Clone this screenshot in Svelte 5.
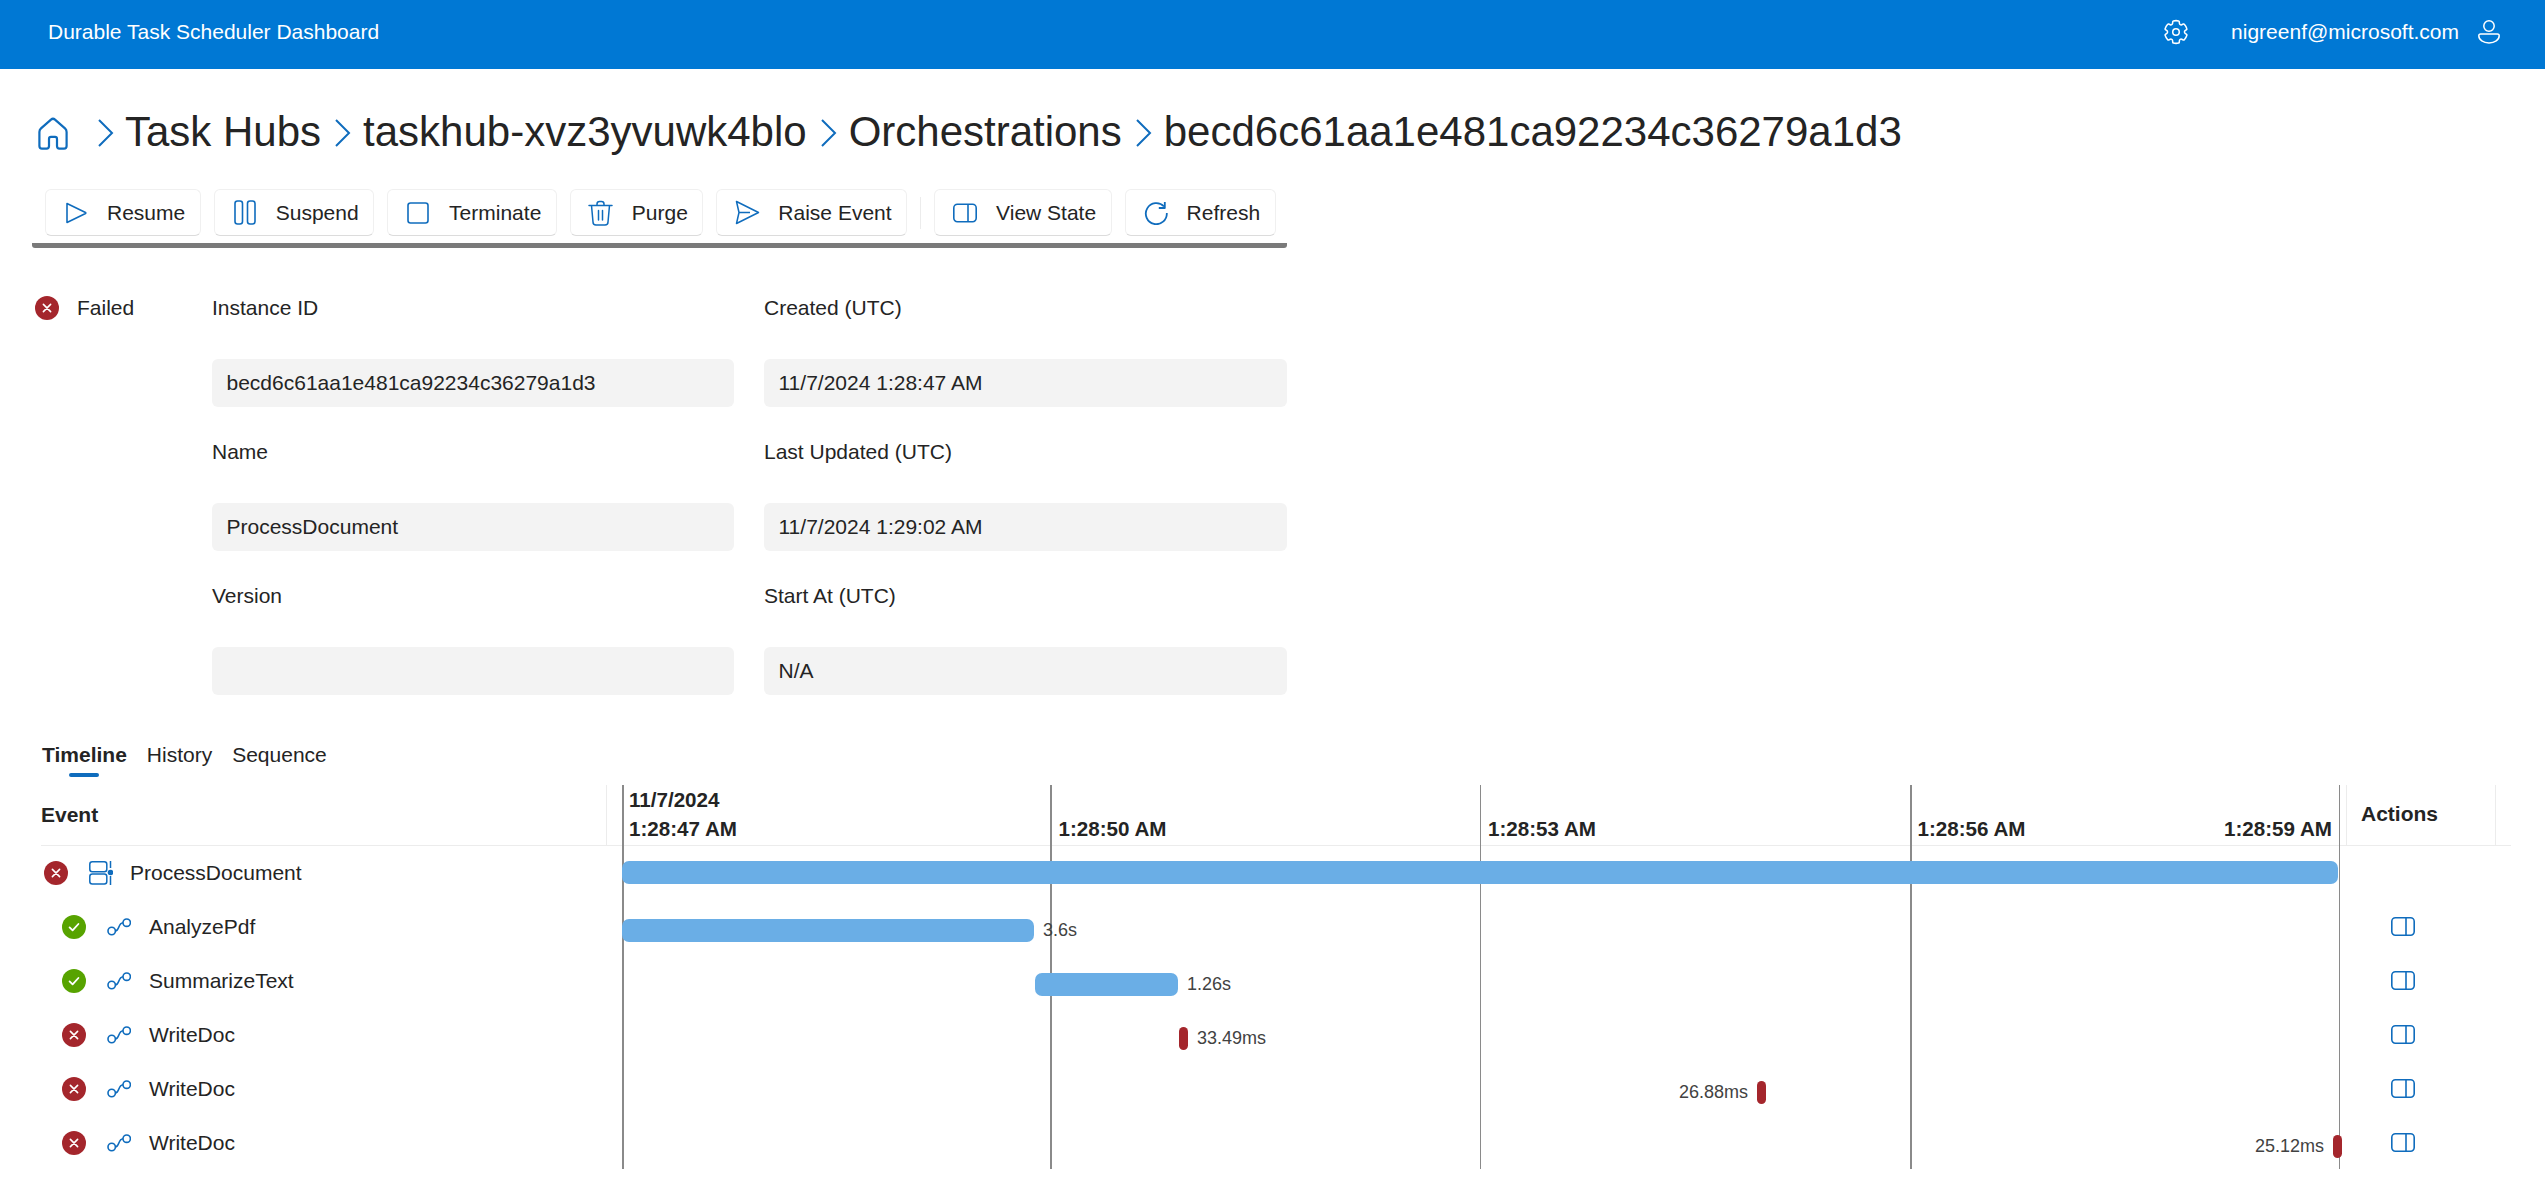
<script>
  const fields = [
    { label: 'Instance ID', value: 'becd6c61aa1e481ca92234c36279a1d3' },
    { label: 'Created (UTC)', value: '11/7/2024 1:28:47 AM' },
    { label: 'Name', value: 'ProcessDocument' },
    { label: 'Last Updated (UTC)', value: '11/7/2024 1:29:02 AM' },
    { label: 'Version', value: '' },
    { label: 'Start At (UTC)', value: 'N/A' }
  ];
  const lines = [
    { x: 0, w: 2 }, { x: 428, w: 2 }, { x: 858, w: 1 }, { x: 1288, w: 2 }, { x: 1717, w: 1 }
  ];
  const rows = [
    { name: 'ProcessDocument', status: 'fail', root: true, left: 0, width: 1716, kind: 'blue', label: '' },
    { name: 'AnalyzePdf', status: 'ok', left: 0, width: 412, kind: 'blue', label: '3.6s' },
    { name: 'SummarizeText', status: 'ok', left: 413, width: 143, kind: 'blue', label: '1.26s' },
    { name: 'WriteDoc', status: 'fail', left: 557, width: 9, kind: 'red', label: '33.49ms' },
    { name: 'WriteDoc', status: 'fail', right: 580, width: 9, kind: 'red', label: '26.88ms' },
    { name: 'WriteDoc', status: 'fail', right: 4, width: 9, kind: 'red', label: '25.12ms' }
  ];
</script>

{#snippet status(kind)}
  <svg class="status" viewBox="0 0 24 24" aria-hidden="true">
    <circle cx="12" cy="12" r="12" fill={kind === 'ok' ? '#57a300' : '#a4262c'} />
    {#if kind === 'ok'}
      <path d="M7.6 12.4l3 3 5.8-6.4" fill="none" stroke="#fff" stroke-width="1.8" stroke-linecap="round" stroke-linejoin="round" />
    {:else}
      <path d="M8.4 8.4l7.2 7.2M15.6 8.4l-7.2 7.2" fill="none" stroke="#fff" stroke-width="1.6" stroke-linecap="round" />
    {/if}
  </svg>
{/snippet}

{#snippet panel(cls)}
  <svg class={cls} viewBox="0 0 24 19" fill="none" stroke="#0f6cbd" stroke-width="1.6" aria-hidden="true">
    <rect x="0.8" y="0.8" width="22.4" height="17.4" rx="3.6" />
    <path d="M15 0.8v17.4" />
  </svg>
{/snippet}

<header class="topbar">
  <span class="brand">Durable Task Scheduler Dashboard</span>
  <div class="account">
    <svg class="gear" viewBox="0 0 24 24" fill="none" stroke="#fff" stroke-width="1.3" stroke-linejoin="round" aria-hidden="true">
      <path d="M12.01 2.25c.74 0 1.47.1 2.18.25.32.07.55.33.59.65l.17 1.53a1.38 1.38 0 0 0 1.92 1.11l1.4-.61c.3-.13.64-.06.85.17a9.8 9.8 0 0 1 2.2 3.8c.1.3 0 .63-.26.82l-1.24.92a1.38 1.38 0 0 0 0 2.22l1.24.92c.26.19.36.52.27.82a9.8 9.8 0 0 1-2.2 3.8.75.75 0 0 1-.85.17l-1.4-.62a1.38 1.38 0 0 0-1.93 1.12l-.17 1.52a.75.75 0 0 1-.57.65 9.52 9.52 0 0 1-4.41 0 .75.75 0 0 1-.57-.65l-.17-1.52a1.38 1.38 0 0 0-1.93-1.11l-1.4.62a.75.75 0 0 1-.85-.18 9.8 9.8 0 0 1-2.2-3.8c-.1-.3 0-.63.27-.82l1.24-.92a1.38 1.38 0 0 0 0-2.22l-1.24-.92a.75.75 0 0 1-.27-.82 9.8 9.8 0 0 1 2.2-3.8c.2-.23.54-.3.85-.17l1.4.62c.83.37 1.79-.19 1.93-1.12l.17-1.53a.75.75 0 0 1 .58-.65c.72-.15 1.44-.25 2.2-.25Z" />
      <circle cx="12" cy="12" r="2.8" />
    </svg>
    <span class="email">nigreenf@microsoft.com</span>
    <svg class="person" viewBox="0 0 22 24" fill="none" stroke="#fff" stroke-width="1.5" aria-hidden="true">
      <circle cx="11" cy="6" r="5.2" />
      <path d="M2.6 14h16.8a1.8 1.8 0 0 1 1.8 1.8c0 4.2-4.6 7.2-10.2 7.2S.8 20 .8 15.8A1.8 1.8 0 0 1 2.6 14Z" />
    </svg>
  </div>
</header>

<main class="page">
  <nav class="crumbs">
    <svg class="home" viewBox="0 0 30 33" fill="none" stroke="#0f6cbd" stroke-width="2.2" stroke-linejoin="round" aria-hidden="true">
      <path d="M13 2.6 3 11.4Q1.400 12.800 1.400 15V29Q1.400 31.600 4 31.600H8.500Q11 31.600 11 29V22Q11 19.800 13 19.800H17Q19 19.800 19 22V29Q19 31.600 21.500 31.600H26Q28.600 31.600 28.600 29V15Q28.600 12.800 27 11.400L17 2.600Q15 .9 13 2.600Z" />
    </svg>
    {#each ['Task Hubs', 'taskhub-xvz3yvuwk4blo', 'Orchestrations', 'becd6c61aa1e481ca92234c36279a1d3'] as crumb, i}
      <svg class="chev" class:first={i === 0} viewBox="0 0 16 28" fill="none" stroke="#0f6cbd" stroke-width="2" aria-hidden="true">
        <path d="M1 1l13 13L1 27" />
      </svg>
      <span class="crumb">{crumb}</span>
    {/each}
  </nav>

  <div class="toolbar">
    <button class="tool"><span class="tool-icon">
      <svg width="22" height="22" viewBox="0 0 22 22" fill="none" stroke="#0f6cbd" stroke-width="1.6" stroke-linejoin="round"><path d="M2 1.500 20.500 10.500a.6.6 0 0 1 0 1L2 20.500Z" /></svg>
    </span>Resume</button>
    <button class="tool"><span class="tool-icon">
      <svg width="22" height="25" viewBox="0 0 22 25" fill="none" stroke="#0f6cbd" stroke-width="1.6"><rect x="1" y="1" width="7.500" height="23" rx="2.500" /><rect x="13.500" y="1" width="7.500" height="23" rx="2.500" /></svg>
    </span>Suspend</button>
    <button class="tool"><span class="tool-icon">
      <svg width="22" height="22" viewBox="0 0 22 22" fill="none" stroke="#0f6cbd" stroke-width="1.6"><rect x="1" y="1" width="20" height="20" rx="2.500" /></svg>
    </span>Terminate</button>
    <button class="tool"><span class="tool-icon">
      <svg width="25" height="26" viewBox="0 0 25 26" fill="none" stroke="#0f6cbd" stroke-width="1.5" stroke-linecap="round"><path d="M1 5.500h23M9 5.500V4a2.500 2.500 0 0 1 2.500-2.500h2A2.500 2.500 0 0 1 16 4v1.500M3.500 5.500 5 22a3 3 0 0 0 3 3h9a3 3 0 0 0 3-3l1.500-16.500M10.500 10.500v9.500M14.500 10.500v9.500" /></svg>
    </span>Purge</button>
    <button class="tool"><span class="tool-icon">
      <svg width="25" height="25" viewBox="0 0 25 25" fill="none" stroke="#0f6cbd" stroke-width="1.5" stroke-linejoin="round"><path d="M1.500 1.500 23.500 12.500 1.500 23.500 4 12.500ZM4 12.500h11" /></svg>
    </span>Raise Event</button>
    <span class="divider"></span>
    <button class="tool"><span class="tool-icon">
      {@render panel('panel-lg')}
    </span>View State</button>
    <button class="tool"><span class="tool-icon">
      <svg width="24" height="24" viewBox="0 0 24 24" fill="none" stroke="#0f6cbd" stroke-width="1.8"><path d="M20 5.500A10.500 10.500 0 1 0 22.800 12" /><path d="M20.800 1v6h-6" stroke-linejoin="round" /></svg>
    </span>Refresh</button>
  </div>

  <section class="details">
    <div class="state">
      {@render status('fail')}
      <span>Failed</span>
    </div>
    <div class="fields">
      {#each fields as field}
        <div class="field">
          <span class="field-label">{field.label}</span>
          <div class="field-value">{field.value}</div>
        </div>
      {/each}
    </div>
  </section>

  <div class="tabs">
    <div class="tab active">Timeline<span class="tab-mark"></span></div>
    <div class="tab">History</div>
    <div class="tab">Sequence</div>
  </div>

  <section class="table">
    <div class="thead">
      <div class="th event-th">Event</div>
      <div class="axis">
        <div class="tick"><span>11/7/2024</span><span>1:28:47 AM</span></div>
        <div class="tick"><span>1:28:50 AM</span></div>
        <div class="tick"><span>1:28:53 AM</span></div>
        <div class="tick"><span>1:28:56 AM</span></div>
        <div class="tick last"><span>1:28:59 AM</span></div>
      </div>
      <div class="th actions-th">Actions</div>
    </div>

    {#each rows as row}
      <div class="row" class:root={row.root}>
        <div class="event">
          {@render status(row.status)}
          {#if row.root}
            <svg class="kind-root" viewBox="0 0 24 24" fill="none" stroke="#0f6cbd" stroke-width="1.5" aria-hidden="true">
              <rect x="0.800" y="0.800" width="17" height="10" rx="2.500" />
              <rect x="0.800" y="13" width="17" height="10" rx="2.500" />
              <path d="M21.500 0v7M21.500 15v9" />
              <circle cx="21.500" cy="11.500" r="2.800" fill="#0f6cbd" stroke="none" />
            </svg>
          {:else}
            <svg class="kind-activity" viewBox="0 0 24 18" fill="none" stroke="#0f6cbd" stroke-width="1.6" aria-hidden="true">
              <circle cx="4.700" cy="13" r="3.700" />
              <circle cx="19.700" cy="4.700" r="3.700" />
              <path d="M8.400 13C12.500 12.800 11 5 16 4.700" />
            </svg>
          {/if}
          <span>{row.name}</span>
        </div>
        <div class="track">
          <div
            class="span"
            class:reverse={row.right !== undefined}
            style={row.right !== undefined ? `right:${row.right}px` : `left:${row.left}px`}
          >
            <div class="bar {row.kind}" style="width:{row.width}px"></div>
            {#if row.label}<span class="duration">{row.label}</span>{/if}
          </div>
        </div>
        <div class="action">
          {#if !row.root}{@render panel('panel-sm')}{/if}
        </div>
      </div>
    {/each}

    <div class="grid-lines" aria-hidden="true">
      {#each lines as line}
        <span class="grid-line" style="left:{line.x}px;width:{line.w}px"></span>
      {/each}
    </div>
  </section>
</main>

<style>
  :global(body) {
    margin: 0;
    background: #fff;
    color: #242424;
    font-family: "Liberation Sans", Arial, sans-serif;
    font-size: 21px;
  }
  .topbar {
    height: 69px;
    background: #0078d4;
    color: #fff;
    display: flex;
    align-items: center;
    justify-content: space-between;
    padding: 0 45px 6px 48px;
    box-sizing: border-box;
  }
  .account { display: flex; align-items: center; }
  .gear { width: 28px; height: 28px; margin-right: 41px; }
  .person { width: 22px; height: 24px; margin-left: 19px; }

  .page { padding-left: 32px; }
  .crumbs {
    display: flex;
    align-items: center;
    height: 54px;
    margin-top: 36px;
    padding-left: 6px;
    font-size: 42px;
  }
  .home { width: 30px; height: 33px; margin-top: 2px; }
  .chev { width: 16px; height: 28px; margin: 2px 12px 0 14px; flex: none; }
  .chev.first { margin: 2px 11px 0 30px; }
  .crumb { white-space: nowrap; }

  .toolbar {
    width: 1255px;
    box-sizing: border-box;
    margin-top: 30px;
    padding: 0 0 7px 13px;
    display: flex;
    align-items: center;
    gap: 13px;
    border-bottom: 5px solid #7a7a7a;
    border-radius: 0 0 3px 3px;
  }
  .tool {
    height: 47px;
    padding: 0 14.500px 0 15px;
    display: flex;
    align-items: center;
    gap: 16px;
    background: #fff;
    border: 1px solid #f0f0f0;
    border-bottom-color: #dcdcdc;
    border-radius: 6px;
    font: inherit;
    color: #242424;
    white-space: nowrap;
    box-sizing: border-box;
  }
  .tool-icon { width: 30px; display: flex; justify-content: center; align-items: center; flex: none; }
  .divider { width: 1px; height: 32px; background: #ececec; }
  .panel-lg { width: 24px; height: 20px; }

  .details { display: flex; margin-top: 36px; }
  .state { width: 180px; display: flex; align-items: center; gap: 18px; height: 48px; padding-left: 3px; box-sizing: border-box; }
  .status { width: 24px; height: 24px; flex: none; }
  .fields {
    display: grid;
    grid-template-columns: 522px 523px;
    column-gap: 30px;
    row-gap: 21px;
  }
  .field { display: flex; flex-direction: column; gap: 27px; }
  .field-label { height: 48px; line-height: 48px; }
  .field-value {
    height: 48px;
    line-height: 48px;
    padding-left: 14.500px;
    background: #f3f3f3;
    border-radius: 6px;
  }

  .tabs { display: flex; gap: 20px; margin: 45px 0 8px 10px; height: 37px; }
  .tab { display: flex; flex-direction: column; align-items: center; line-height: 30px; gap: 3px; }
  .tab.active { font-weight: 700; }
  .tab-mark { width: 30px; height: 4px; border-radius: 2px; background: #0f6cbd; }

  .table { position: relative; margin-left: 9px; width: 2470px; }
  .thead {
    display: grid;
    grid-template-columns: 566px 1739px 150px;
    height: 61px;
    box-sizing: border-box;
    border-bottom: 1px solid #ececec;
  }
  .th { font-weight: 700; display: flex; align-items: center; height: 60px; box-sizing: border-box; }
  .event-th { border-right: 1px solid #ececec; }
  .actions-th { border-left: 1px solid #ececec; border-right: 1px solid #ececec; padding-left: 14px; padding-bottom: 2px; }
  .axis { display: flex; padding-left: 15px; font-size: 20.600px; font-weight: 700; }
  .tick {
    width: 429.500px;
    flex: none;
    padding: 0 0 2px 7px;
    box-sizing: border-box;
    display: flex;
    flex-direction: column;
    justify-content: flex-end;
    line-height: 29px;
    white-space: nowrap;
  }
  .tick.last { width: 0; padding-left: 0; margin-left: -8px; align-items: flex-end; }

  .row { display: grid; grid-template-columns: 581px 1724px 165px; height: 54px; }
  .event { display: flex; align-items: center; padding-left: 21px; white-space: nowrap; }
  .row.root .event { padding-left: 3px; }
  .kind-activity { width: 24px; height: 18px; margin: 0 18px 0 21px; flex: none; }
  .kind-root { width: 24px; height: 24px; margin: 0 17px 0 21px; flex: none; }
  .track { position: relative; z-index: 1; }
  .span { position: absolute; top: 19px; display: flex; align-items: center; gap: 9px; }
  .span.reverse { flex-direction: row-reverse; }
  .row.root .span { top: 15px; }
  .bar { height: 23px; }
  .bar.blue { background: #6aaee6; border-radius: 7px; }
  .bar.red { background: #a4262c; border-radius: 5px; }
  .duration { font-size: 18px; color: #424242; white-space: nowrap; }
  .action { display: flex; align-items: center; padding: 0 0 2px 45px; }
  .panel-sm { width: 24px; height: 19px; }

  .grid-lines { position: absolute; left: 581px; top: 0; bottom: 1px; width: 1724px; }
  .grid-line { position: absolute; top: 0; bottom: 0; background: #8a8a8a; }
</style>
